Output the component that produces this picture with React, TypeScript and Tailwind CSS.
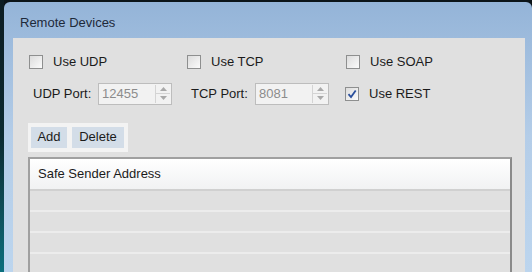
import React from "react";

function CheckBox({ label, checked }: { label: string; checked?: boolean }) {
  return (
    <div className="flex items-center gap-[10px]">
      <div className="w-[14px] h-[14px] border border-[#8e8f8f] bg-gradient-to-br from-[#dcdcdc] to-[#fbfbfb] flex items-center justify-center">
        {checked && (
          <svg width="10" height="10" viewBox="0 0 10 10">
            <path d="M1.5 5.2 L4 8 L8.7 1.5" fill="none" stroke="#2a4f9c" strokeWidth="1.8" />
          </svg>
        )}
      </div>
      <span>{label}</span>
    </div>
  );
}

function Spinner({ value }: { value: string }) {
  return (
    <div className="w-[74px] h-[22px] border border-[#bdbdbd] bg-[#f2f2f2] flex items-stretch">
      <span className="flex-1 pl-[3px] text-[#8c8c8c] leading-[20px]">{value}</span>
      <div className="w-[15px] flex flex-col border-l border-[#d4d4d4] my-[1px] mr-[1px]">
        <div className="flex-1 flex items-center justify-center border-b border-[#d4d4d4]">
          <svg width="7" height="4" viewBox="0 0 7 4">
            <path d="M0 4 L3.5 0 L7 4 Z" fill="#a9a9a9" />
          </svg>
        </div>
        <div className="flex-1 flex items-center justify-center">
          <svg width="7" height="4" viewBox="0 0 7 4">
            <path d="M0 0 L3.5 4 L7 0 Z" fill="#a9a9a9" />
          </svg>
        </div>
      </div>
    </div>
  );
}

export default function App() {
  return (
    <div className="w-[532px] h-[272px] overflow-hidden flex bg-[#0b1419] text-[13px] text-[#1b1b1b] font-['Liberation_Sans',Arial,sans-serif]">
      <div className="w-[4px] shrink-0 bg-gradient-to-b from-[#0c1c22] via-[#0b2a31] to-[#0a6f7e]" />
      <div className="flex-1 min-h-0 mt-[2px] rounded-t-[6px] bg-gradient-to-b from-[#94b4d8] via-[#b4cde8] to-[#bcd5ee] flex flex-col pl-[9px] pr-[7px]">
        <div className="h-[36px] shrink-0 flex items-end pb-[6px] pl-[7px] text-[#1e2a3a]">Remote Devices</div>
        <div className="flex-1 min-h-0 overflow-hidden bg-[#e0e0e0] pl-[15px] pt-[14px]">
          <div className="flex pl-[1px]">
            <div className="w-[158px]"><CheckBox label="Use UDP" /></div>
            <div className="w-[159px]"><CheckBox label="Use TCP" /></div>
            <CheckBox label="Use SOAP" />
          </div>
          <div className="flex items-center mt-[11px]">
            <div className="w-[158px] flex items-center">
              <span className="w-[70px] pl-[5px]">UDP Port:</span>
              <Spinner value="12455" />
            </div>
            <div className="w-[159px] flex items-center">
              <span className="w-[69px] pl-[5px]">TCP Port:</span>
              <Spinner value="8081" />
            </div>
            <CheckBox label="Use REST" checked />
          </div>
          <div className="mt-[18px] w-[100px] h-[29px] bg-[#f3f3f3] flex items-center gap-[5px] px-[3px]">
            <div className="w-[36px] h-[21px] bg-[#d3dde8] flex items-center justify-center">Add</div>
            <div className="w-[52px] h-[21px] bg-[#d3dde8] flex items-center justify-center">Delete</div>
          </div>
          <div className="mt-[5px] w-[484px] h-[140px] border-2 border-[#a0a0a0] border-r-[#8a8a8a] bg-[#e0e0e0]">
            <div className="h-[32px] bg-gradient-to-b from-white to-[#f1f2f3] border-b-2 border-[#d0d0d0] flex items-center pl-[8px]">
              Safe Sender Address
            </div>
            <div className="h-[21px] border-b-2 border-[#ececec]" />
            <div className="h-[21px] border-b-2 border-[#ececec]" />
            <div className="h-[21px] border-b-2 border-[#ececec]" />
          </div>
        </div>
      </div>
    </div>
  );
}
